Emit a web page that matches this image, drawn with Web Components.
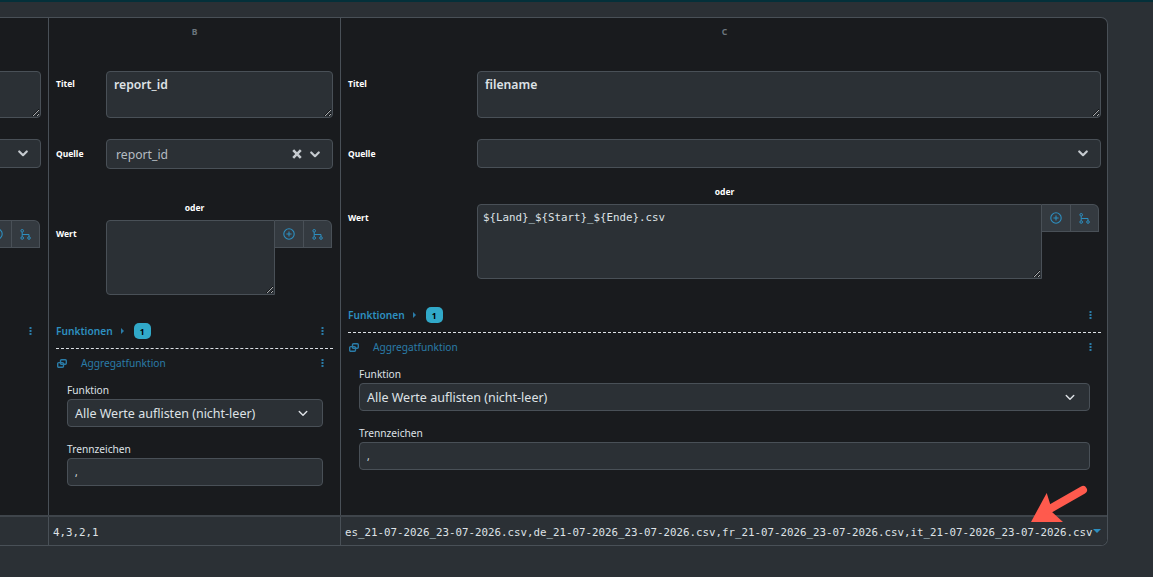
<!DOCTYPE html>
<html lang="de">
<head>
<meta charset="utf-8">
<title>Spalten</title>
<style>
  html, body { margin: 0; height: 100%; overflow: hidden; }
  body { background: #2b3035; color: #dee2e6; font-family: "Noto Sans", sans-serif; }
</style>
</head>
<body>
<res-page>
  <res-grid>
    <res-column label-width="50" gap="52">
      <res-field slot="title"><res-area></res-area></res-field>
      <res-field slot="source"><res-picker></res-picker></res-field>
      <res-value slot="value" width="169"></res-value>
      <res-functions slot="functions"></res-functions>
    </res-column>

    <res-column letter="B" oder="oder" label-width="50" gap="52">
      <res-field label="Titel" slot="title"><res-area strong>report_id</res-area></res-field>
      <res-field label="Quelle" slot="source"><res-picker clearable>report_id</res-picker></res-field>
      <res-value slot="value" label="Wert" width="169"></res-value>
      <res-functions slot="functions" count="1" open></res-functions>
    </res-column>

    <res-column letter="C" oder="oder" label-width="129" gap="36" style="--form-right:11px">
      <res-field label="Titel" slot="title"><res-area strong>filename</res-area></res-field>
      <res-field label="Quelle" slot="source"><res-picker></res-picker></res-field>
      <res-value slot="value" label="Wert" width="565" text="${Land}_${Start}_${Ende}.csv"></res-value>
      <res-functions slot="functions" count="1" open></res-functions>
    </res-column>
  </res-grid>

  <res-footer>
    <span></span>
    <span>4,3,2,1</span>
    <span>es_21-07-2026_23-07-2026.csv,de_21-07-2026_23-07-2026.csv,fr_21-07-2026_23-07-2026.csv,it_21-07-2026_23-07-2026.csv</span>
  </res-footer>
</res-page>
<res-arrow></res-arrow>

<script>
const CHEVRON = `<svg width="10" height="7" viewBox="0 0 12 8" fill="none" stroke="currentColor" stroke-linecap="round" stroke-linejoin="round"><path d="M1.5 1.5 6 6l4.5-4.5"/></svg>`;
const KEBAB = `<svg width="3" height="8" viewBox="0 0 3 8" fill="currentColor"><rect x=".5" y="0" width="2" height="2"/><rect x=".5" y="3" width="2" height="2"/><rect x=".5" y="6" width="2" height="2"/></svg>`;

class ResPage extends HTMLElement {
  constructor() {
    super();
    const shadow = this.attachShadow({mode: 'open'});
    shadow.innerHTML = `<style>
      :host{display:block;height:577px;box-sizing:border-box;border-top:2px solid #04303a;padding:15px 45px 0 0;overflow:hidden;}
      .panel{display:flex;flex-direction:column;align-items:flex-end;height:529px;box-sizing:border-box;
        background:#191b1e;border:1px solid #495057;border-left:0;border-radius:0 7px 7px 0;overflow:hidden;}
    </style><div class="panel"><slot></slot></div>`;
  }
}

class ResGrid extends HTMLElement {
  constructor() {
    super();
    const shadow = this.attachShadow({mode: 'open'});
    shadow.innerHTML = `<style>
      :host{display:grid;grid-template-columns:292px 292px 766px;flex:none;height:497px;}
    </style><slot></slot>`;
  }
}

class ResColumn extends HTMLElement {
  constructor() {
    super();
    const shadow = this.attachShadow({mode: 'open'});
    shadow.innerHTML = `<style>
      :host{display:block;box-sizing:border-box;border-right:1px solid #495057;padding:0 7px 0 7px;}
      :host(:last-child){border-right:0;padding-right:6px;}
      .letter{text-align:center;font:700 8.5px/12px "Noto Sans",sans-serif;color:#6c757d;padding-top:8px;height:53px;box-sizing:border-box;}
      .source{display:block;margin-top:21px;min-height:30px;--label-top:9px;}
      .oder{text-align:center;font:700 8.5px/12px "Noto Sans",sans-serif;color:#fff;height:12px;}
    </style>
    <div class="letter"></div>
    <slot name="title"></slot>
    <div class="source"><slot name="source"></slot></div>
    <div class="oder"></div>
    <slot name="value"></slot>
    <slot name="functions"></slot>`;
  }

  connectedCallback() {
    this.shadowRoot.querySelector('.letter').textContent = this.getAttribute('letter');
    const oder = this.shadowRoot.querySelector('.oder');
    oder.textContent = this.getAttribute('oder');
    const gap = Number(this.getAttribute('gap'));
    oder.style.marginTop = `${gap - 19}px`;
    oder.style.marginBottom = '6px';
    this.style.setProperty('--label-width', `${this.getAttribute('label-width')}px`);
  }
}

class ResField extends HTMLElement {
  constructor() {
    super();
    const shadow = this.attachShadow({mode: 'open'});
    shadow.innerHTML = `<style>
      :host{display:flex;align-items:flex-start;}
      .label{flex:none;width:var(--label-width);font:700 8.5px/12px "Noto Sans",sans-serif;color:#fff;padding-top:var(--label-top,7px);}
      .control{flex:1;min-width:0;}
    </style><div class="label"></div><div class="control"><slot></slot></div>`;
  }

  connectedCallback() {
    this.shadowRoot.querySelector('.label').textContent = this.getAttribute('label');
  }
}

class ResArea extends HTMLElement {
  constructor() {
    super();
    const shadow = this.attachShadow({mode: 'open'});
    shadow.innerHTML = `<style>
      :host{display:block;}
      textarea{display:block;box-sizing:border-box;width:100%;height:47px;margin:0;padding:4px 7px;resize:both;color-scheme:dark;
        background:#2b3035;color:#dee2e6;border:1px solid #495057;border-radius:4px;outline:0;
        font:600 12.2px/17px "Noto Sans",sans-serif;}
    </style><textarea></textarea>`;
  }

  connectedCallback() {
    this.shadowRoot.querySelector('textarea').textContent = this.textContent;
  }
}

class ResPicker extends HTMLElement {
  constructor() {
    super();
    const shadow = this.attachShadow({mode: 'open'});
    shadow.innerHTML = `<style>
      :host{display:flex;align-items:center;box-sizing:border-box;height:29px;padding:0 12px 0 9px;gap:8px;
        background:#2b3035;border:1px solid #495057;border-radius:4px;color:#b5bcc2;font:400 12.2px "Noto Sans",sans-serif;}
      :host([clearable]){height:30px;}
      .text{flex:1;}
      svg{flex:none;stroke-width:2.6;color:#c4c9ce;}
    </style>
    <span class="text"><slot></slot></span>
    <svg class="clear" width="10" height="10" viewBox="0 0 10 10" fill="none" stroke="currentColor"><path d="M1.2 1.2l7.6 7.6M8.8 1.2 1.2 8.8"/></svg>
    ${CHEVRON}`;
  }

  connectedCallback() {
    if (!this.hasAttribute('clearable')) this.shadowRoot.querySelector('.clear').remove();
  }
}

class ResValue extends HTMLElement {
  constructor() {
    super();
    const shadow = this.attachShadow({mode: 'open'});
    shadow.innerHTML = `<style>
      :host{display:flex;align-items:flex-start;}
      .label{flex:none;width:var(--label-width);font:700 8.5px/12px "Noto Sans",sans-serif;color:#fff;padding-top:8px;}
      textarea{display:block;flex:none;box-sizing:border-box;height:75px;margin:0;padding:6px 5px;resize:both;color-scheme:dark;
        background:#2b3035;color:#dee2e6;border:1px solid #495057;border-radius:4px 0 0 4px;outline:0;
        font:400 10.8px/14px "DejaVu Sans Mono",monospace;}
      .buttons{display:flex;border:solid #495057;border-width:1px 1px 1px 0;border-radius:0 6px 0 0;background:#343a40;height:28px;box-sizing:border-box;}
      .buttons span{display:flex;align-items:center;justify-content:center;box-sizing:border-box;width:28px;color:#2d8fc0;}
      .buttons span + span{border-left:1px solid #495057;}
    </style>
    <div class="label"></div>
    <textarea></textarea>
    <div class="buttons">
      <span><svg width="12" height="12" viewBox="0 0 12 12" fill="none" stroke="currentColor" stroke-width="1.1"><circle cx="6" cy="6" r="5.2"/><path d="M6 3.4v5.2M3.4 6h5.2"/></svg></span>
      <span><svg width="11" height="11" viewBox="0 0 11 11" fill="none" stroke="currentColor"><circle cx="2.2" cy="1.8" r="1.3"/><circle cx="2.2" cy="9" r="1.3"/><circle cx="9" cy="9" r="1.3"/><path d="M2.2 3.1v4.6M2.2 5.5H9v2.2"/></svg></span>
    </div>`;
  }

  connectedCallback() {
    const area = this.shadowRoot.querySelector('textarea');
    area.textContent = this.getAttribute('text') || '';
    area.style.width = `${this.getAttribute('width') || 300}px`;
    this.shadowRoot.querySelector('.label').textContent = this.getAttribute('label');
  }
}

class ResFunctions extends HTMLElement {
  constructor() {
    super();
    const shadow = this.attachShadow({mode: 'open'});
    shadow.innerHTML = `<style>
      :host{display:block;margin-top:27px;font-family:"Noto Sans",sans-serif;color:#dee2e6;}
      .head{display:flex;align-items:center;height:18px;font-size:10.2px;font-weight:600;color:#2d8fc0;}
      .caret{width:0;height:0;border-left:3px solid #2a7ca8;border-top:3px solid transparent;border-bottom:3px solid transparent;margin:0 10px 0 8px;}
      .badge{display:flex;align-items:center;justify-content:center;width:17px;height:16px;border-radius:5px;background:#31a9c9;color:#000;font-size:8.5px;font-weight:700;}
      .kebab{margin-left:auto;margin-right:9px;display:flex;color:#2a7ca8;}
      .body{margin-top:8px;border-top:1px dashed #dee2e6;}
      .sub{display:flex;align-items:center;height:26px;margin-top:1px;font-size:10.2px;color:#2a7ca8;}
      .sub svg.stack{margin:0 14px 0 1px;}
      .form{padding:0 var(--form-right,10px) 0 11px;}
      label{display:block;font-size:10.2px;line-height:14px;margin-bottom:2px;}
      .box{display:flex;align-items:center;justify-content:space-between;box-sizing:border-box;height:28px;padding:0 14px 0 7px;margin-bottom:15px;
        background:#2b3035;border:1px solid #495057;border-radius:4px;font-size:12.5px;color:#dee2e6;}
      .box svg{stroke-width:1.7;}
      .comma{font-size:10px;}
      .first{margin-top:7px;}
    </style>
    <div class="head">
      <span class="name">Funktionen</span><span class="caret"></span><span class="badge"></span>
      <span class="kebab">${KEBAB}</span>
    </div>
    <div class="body">
      <div class="sub">
        <svg class="stack" width="10" height="9" viewBox="0 0 10 9" fill="none" stroke="currentColor" stroke-width="1.4"><rect x="3.5" y=".7" width="5.8" height="4.6" rx="1"/><rect x=".7" y="3.6" width="5.8" height="4.6" rx="1"/></svg>
        <span>Aggregatfunktion</span>
        <span class="kebab">${KEBAB}</span>
      </div>
      <div class="form">
        <label class="first">Funktion</label>
        <div class="box"><span>Alle Werte auflisten (nicht-leer)</span>${CHEVRON}</div>
        <label>Trennzeichen</label>
        <div class="box"><span class="comma">,</span></div>
      </div>
    </div>`;
  }

  connectedCallback() {
    const root = this.shadowRoot;
    if (this.hasAttribute('count')) {
      root.querySelector('.badge').textContent = this.getAttribute('count');
    } else {
      root.querySelector('.name').remove();
      root.querySelector('.caret').remove();
      root.querySelector('.badge').remove();
    }
    if (!this.hasAttribute('open')) root.querySelector('.body').remove();
  }
}

class ResFooter extends HTMLElement {
  constructor() {
    super();
    const shadow = this.attachShadow({mode: 'open'});
    shadow.innerHTML = `<style>
      :host{position:relative;display:grid;grid-template-columns:292px 292px 766px;flex:none;height:30px;box-sizing:border-box;
        background:#2b3035;border-top:2px solid #3f454b;color:#dee2e6;font:400 10.8px/28px "DejaVu Sans Mono",monospace;}
      ::slotted(span){display:block;box-sizing:border-box;padding:2px 0 0 4px;border-right:1px solid #495057;white-space:nowrap;overflow:hidden;}
      ::slotted(span:last-child){border-right:0;}
      .tri{position:absolute;right:6px;top:12px;width:0;height:0;border-top:4px solid #2d8fc0;border-left:4px solid transparent;border-right:4px solid transparent;}
    </style><slot></slot><span class="tri"></span>`;
  }
}

class ResArrow extends HTMLElement {
  constructor() {
    super();
    const shadow = this.attachShadow({mode: 'open'});
    shadow.innerHTML = `<style>
      :host{position:absolute;left:1025px;top:483px;display:block;}
      svg{display:block;}
    </style>
    <svg width="70" height="45" viewBox="1025 483 70 45">
      <path d="M1031 522 1046.7 493 1050 503.5 1052 512 1063 522Z" fill="#ff5a4d"/>
      <path d="M1048 510 1083 490" stroke="#ff5a4d" stroke-width="8" stroke-linecap="round" fill="none"/>
    </svg>`;
  }
}

customElements.define('res-page', ResPage);
customElements.define('res-grid', ResGrid);
customElements.define('res-column', ResColumn);
customElements.define('res-field', ResField);
customElements.define('res-area', ResArea);
customElements.define('res-picker', ResPicker);
customElements.define('res-value', ResValue);
customElements.define('res-functions', ResFunctions);
customElements.define('res-footer', ResFooter);
customElements.define('res-arrow', ResArrow);
</script>
</body>
</html>
